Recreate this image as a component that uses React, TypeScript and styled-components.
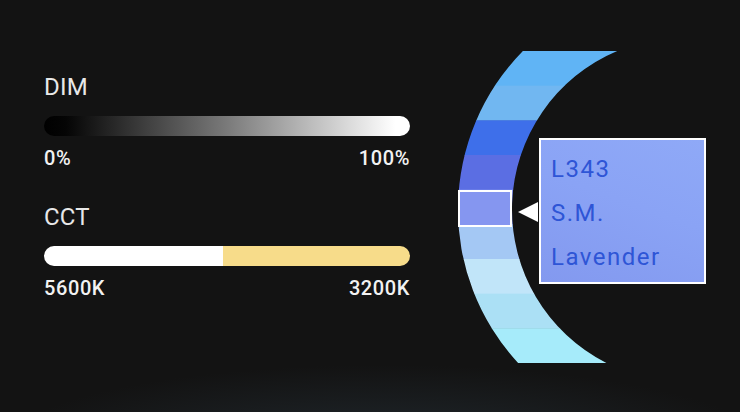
import React from "react";
import styled, { createGlobalStyle } from "styled-components";

const GlobalStyle = createGlobalStyle`
  html, body {
    margin: 0;
    padding: 0;
    background: #131313;
  }
  #root {
    width: 740px;
    height: 412px;
  }
  * { box-sizing: border-box; }
`;

const Page = styled.div`
  width: 740px;
  height: 412px;
  overflow: hidden;
  display: flex;
  flex-direction: row;
  align-items: flex-start;
  gap: 48px;
  padding: 51px 0 0 44px;
  font-family: Roboto, "Liberation Sans", sans-serif;
  background:
    radial-gradient(ellipse 380px 80px at 52% 108%, #20272c 0%, rgba(19, 19, 19, 0) 100%),
    #131313;
`;

const ControlColumn = styled.div`
  width: 366px;
  padding-top: 24px;
  display: flex;
  flex-direction: column;
  gap: 37px;
`;

const ControlGroup = styled.section`
  display: flex;
  flex-direction: column;
`;

const Title = styled.div`
  font-size: 24px;
  line-height: 24px;
  font-weight: 400;
  color: #e8e8e8;
  letter-spacing: 0.2px;
`;

const Track = styled.div<{ $fill: string }>`
  height: 20px;
  border-radius: 10px;
  margin: 17px 0 12px;
  background: ${(p) => p.$fill};
`;

const Scale = styled.div`
  display: flex;
  justify-content: space-between;
  font-size: 20px;
  line-height: 20px;
  font-weight: 500;
  color: #f2f2f2;
  letter-spacing: 0.6px;
`;

const Picker = styled.div`
  position: relative;
  width: 250px;
  height: 312px;
  flex: none;
`;

const ArcSvg = styled.svg`
  display: block;
`;

const SelectionBox = styled.div`
  position: absolute;
  left: 0;
  top: 139px;
  width: 54px;
  height: 37px;
  border: 2px solid #ffffff;
  background: #8596f0;
`;

const Callout = styled.div`
  position: absolute;
  left: 81px;
  top: 87px;
  width: 167px;
  height: 146px;
  border: 2px solid #ffffff;
  padding: 7px 0 0 10px;
  background: linear-gradient(20deg, #8399ef 0%, #8aa3f5 55%, #8fa9f7 100%);
  color: #2e55d6;
  font-size: 24px;
  line-height: 44px;
  font-weight: 400;
  letter-spacing: 1.5px;

  &::before {
    content: "";
    position: absolute;
    left: -23px;
    top: 62px;
    width: 0;
    height: 0;
    border-top: 10.5px solid transparent;
    border-bottom: 10.5px solid transparent;
    border-right: 20px solid #ffffff;
  }
`;

const CalloutLine = styled.div``;

const bands = [
  "#60b4f5",
  "#71b7f1",
  "#3e6fea",
  "#5b6ee3",
  "#8596f0",
  "#a4c8f4",
  "#c1e5f9",
  "#abe0f5",
  "#a6ebfa",
];

const ARC_PATH =
  "M64.9 0 A226 226 0 0 0 60.1 312 L148.4 312 A172 172 0 0 1 159.2 0 Z";

function ColorArc() {
  const h = 312 / bands.length;
  return (
    <ArcSvg width={250} height={312} viewBox="0 0 250 312">
      <defs>
        <clipPath id="arcClip">
          <path d={ARC_PATH} />
        </clipPath>
      </defs>
      <g clipPath="url(#arcClip)">
        {bands.map((c, i) => (
          <rect key={i} x={0} y={i * h} width={250} height={h + 0.5} fill={c} />
        ))}
      </g>
    </ArcSvg>
  );
}

export default function App() {
  return (
    <>
      <GlobalStyle />
      <Page>
        <ControlColumn>
          <ControlGroup>
            <Title>DIM</Title>
            <Track $fill="linear-gradient(90deg, #000000 0%, #050505 6%, #7a7a7a 50%, #ffffff 96%)" />
            <Scale>
              <span>0%</span>
              <span>100%</span>
            </Scale>
          </ControlGroup>
          <ControlGroup>
            <Title>CCT</Title>
            <Track $fill="linear-gradient(90deg, #ffffff 0%, #ffffff 49%, #f7dc8a 49%, #f7dc8a 100%)" />
            <Scale>
              <span>5600K</span>
              <span>3200K</span>
            </Scale>
          </ControlGroup>
        </ControlColumn>
        <Picker>
          <ColorArc />
          <SelectionBox />
          <Callout>
            <CalloutLine>L343</CalloutLine>
            <CalloutLine>S.M.</CalloutLine>
            <CalloutLine>Lavender</CalloutLine>
          </Callout>
        </Picker>
      </Page>
    </>
  );
}
